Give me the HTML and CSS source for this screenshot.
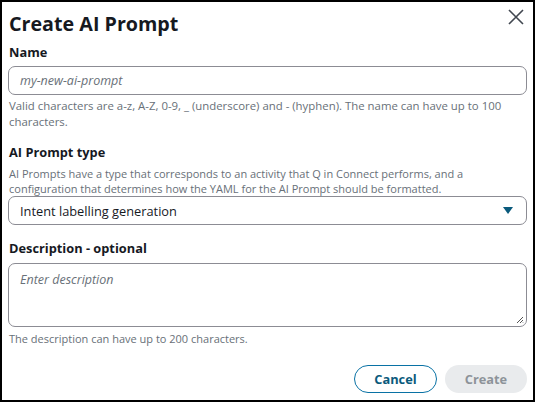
FILE: index.html
```html
<!DOCTYPE html>
<html>
<head>
<meta charset="utf-8">
<link rel="stylesheet" href="styles.css">
</head>
<body>
<div class="modal">
  <div class="header">
    <h1 class="title">Create AI Prompt</h1>
    <button class="close" aria-label="Close">
      <svg width="16" height="16" viewBox="0 0 16 16"><path d="M1 1 L15 15 M15 1 L1 15" stroke="#414750" stroke-width="1.6" fill="none"/></svg>
    </button>
  </div>

  <div class="field">
    <label class="label">Name</label>
    <div class="input"><span class="placeholder">my-new-ai-prompt</span></div>
    <p class="hint hint-name">Valid characters are a-z, A-Z, 0-9, _ (underscore) and - (hyphen). The name can have up to 100 characters.</p>
  </div>

  <div class="field">
    <label class="label">AI Prompt type</label>
    <p class="desc">AI Prompts have a type that corresponds to an activity that Q in Connect performs, and a configuration that determines how the YAML for the AI Prompt should be formatted.</p>
    <div class="select">
      <span class="value">Intent labelling generation</span>
      <svg class="caret" width="10" height="7" viewBox="0 0 10 7"><path d="M0 0 H10 L5 7 Z" fill="#0a5a7c"/></svg>
    </div>
  </div>

  <div class="field">
    <label class="label label-desc">Description - optional</label>
    <div class="textarea">
      <span class="placeholder">Enter description</span>
      <svg class="grip" width="8" height="8" viewBox="0 0 8 8"><path d="M7 1 L1 7 M7 4 L4 7 M7 6.5 L6.5 7" stroke="#555" stroke-width="1" fill="none"/></svg>
    </div>
    <p class="hint hint-desc">The description can have up to 200 characters.</p>
  </div>

  <div class="footer">
    <button class="btn cancel">Cancel</button>
    <button class="btn create">Create</button>
  </div>
</div>
</body>
</html>
```
FILE: styles.css
```css
* { box-sizing: border-box; }
html, body { margin: 0; padding: 0; background: #fff; }
body { font-family: "Open Sans", "Noto Sans", sans-serif; color: #16191f; }
.modal {
  width: 535px;
  height: 402px;
  border: 2px solid #000;
  padding: 6px 6px 0 6px;
  display: flex;
  flex-direction: column;
}
.header {
  display: flex;
  justify-content: space-between;
  align-items: flex-start;
  height: 34px;
  padding-left: 1px;
}
.title {
  margin: 2px 0 0 0;
  font-size: 19.7px;
  font-weight: 700;
  line-height: 28px;
}
.close {
  border: none;
  background: none;
  padding: 0;
  margin: 1px 3px 0 0;
  width: 16px;
  height: 16px;
}
.close svg { display: block; }
.field { display: flex; flex-direction: column; }
.label {
  font-size: 12.8px;
  font-weight: 700;
  line-height: 20px;
  margin-bottom: 4px;
  padding-left: 1px;
}
.label-desc { margin-bottom: 5px; }
.input, .select {
  height: 29px;
  border: 1.5px solid #8c8c94;
  border-radius: 7px;
  display: flex;
  align-items: center;
  padding: 0 11px;
}
.placeholder {
  font-style: italic;
  color: #687078;
  font-size: 12.5px;
}
.hint, .desc {
  margin: 0;
  font-size: 11px;
  line-height: 15px;
  color: #687078;
  padding-left: 1px;
}
.hint-name { font-size: 11.4px; line-height: 16px; margin-top: 3px; margin-bottom: 12px; }
.hint-desc { line-height: 16px; margin-top: 4px; }
.desc { margin: 0; }
.select { justify-content: space-between; padding-right: 13px; margin-bottom: 13px; }
.value { font-size: 12.8px; color: #16191f; }
.textarea {
  position: relative;
  height: 64px;
  border: 1.5px solid #8c8c94;
  border-radius: 7px;
  padding: 3px 11px;
}
.grip { position: absolute; right: 2px; bottom: 2px; }
.footer {
  display: flex;
  justify-content: flex-end;
  gap: 8px;
  margin-top: 18px;
}
.btn {
  height: 28px;
  border-radius: 14px;
  font-family: inherit;
  font-size: 12.8px;
  font-weight: 700;
  padding: 0;
}
.cancel {
  width: 83px;
  border: 1.5px solid #0972a5;
  background: #fff;
  color: #0a5a7c;
}
.create {
  width: 82px;
  border: none;
  background: #e9ebed;
  color: #8d9399;
}
```
